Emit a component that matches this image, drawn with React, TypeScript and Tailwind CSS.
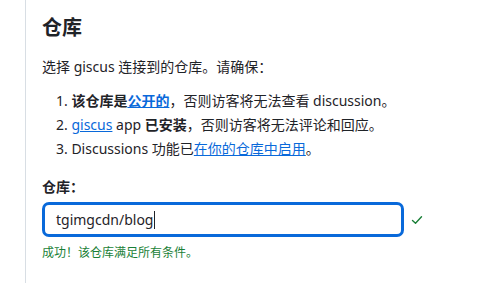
export default function App() {
  return (
    <div
      className="h-[283px] w-[487px] bg-white pl-[25px] text-[#1f2328]"
      style={{ fontFamily: '"Noto Sans", "Noto Sans CJK SC", sans-serif' }}
    >
      <div className="h-full border-l border-[#d8dee4] pl-4 pt-[15px]">
        <h3 className="text-[20px] font-bold leading-[26px]">仓库</h3>
        <p className="mt-[14px] text-[14px] leading-[24px]">选择 giscus 连接到的仓库。请确保：</p>
        <ol className="mt-[10px] pl-[14px] text-[14px] leading-[24px]">
          <li>
            1. <strong>该仓库是<a className="text-[#0969da] underline">公开的</a></strong>，否则访客将无法查看 discussion。
          </li>
          <li>
            2. <a className="text-[#0969da] underline">giscus</a> app <strong>已安装</strong>，否则访客将无法评论和回应。
          </li>
          <li>
            3. Discussions 功能已<a className="text-[#0969da] underline">在你的仓库中启用</a>。
          </li>
        </ol>
        <label className="mt-[15px] block text-[14px] font-bold leading-[22px]">仓库：</label>
        <div className="mt-[4px] flex items-center">
          <div className="flex h-[35px] w-[362px] items-center rounded-[7px] border-[3px] border-[#0969da] px-[11px] text-[14px]">
            tgimgcdn/blog<span className="ml-px h-[18px] w-px bg-[#1f2328]" />
          </div>
          <svg className="ml-[7px] h-[12px] w-[12px] text-[#1a7f37]" viewBox="0 0 12 12" fill="none" stroke="currentColor" strokeWidth="1.4" strokeLinecap="round" strokeLinejoin="round">
            <path d="M1.5 6.5 4.5 9.2 10.5 2.8" />
          </svg>
        </div>
        <p className="mt-[7px] text-[12px] leading-[18px] text-[#1a7f37]">成功！该仓库满足所有条件。</p>
      </div>
    </div>
  );
}
